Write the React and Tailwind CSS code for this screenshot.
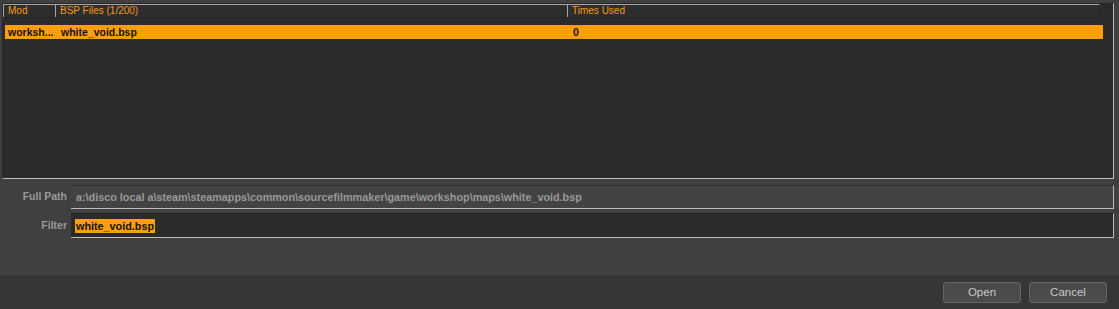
import React from "react";

const font = { fontFamily: '"Liberation Sans", Arial, sans-serif' };

const App = () => {
  return (
    <div className="w-[1119px] h-[309px] bg-[#404040] flex flex-col" style={font}>
      <div className="flex-1 flex flex-col pt-[3px] pl-[2px] pr-[5px]">
        {/* list panel */}
        <div className="h-[176px] bg-[#2b2b2b] border-t border-l border-[#262626] border-r border-r-[#bdbdbd] border-b border-b-[#bdbdbd] flex flex-col">
          <div className="flex h-[14px] w-[1097px] bg-[#2d2d2d] border-t border-[#a8a8a8] border-r border-r-[#222] border-b border-b-[#222] text-[10px] leading-[12px] text-[#f59a1e]">
            <div className="w-[52px] border-l border-[#a8a8a8] pl-[4px]">Mod</div>
            <div className="w-[512px] border-l border-[#a8a8a8] pl-[4px]">BSP Files (1/200)</div>
            <div className="flex-1 border-l border-[#a8a8a8] pl-[4px]">Times Used</div>
          </div>
          <div className="mt-[7px] ml-[2px] mr-[10px] h-[14px] bg-[#ffa000] flex text-[10.5px] leading-[14px] font-bold text-[#111]">
            <div className="w-[56px] pl-[3px]">worksh...</div>
            <div className="w-[512px]">white_void.bsp</div>
            <div className="flex-1">0</div>
          </div>
        </div>

        {/* fields */}
        <div className="mt-[6px] flex items-center">
          <div className="w-[69px] pr-[4px] text-right text-[10.5px] font-bold text-[#9a9a9a]">Full Path</div>
          <div className="flex-1 h-[24px] bg-[#434343] border-t border-[#2e2e2e] border-r border-r-[#bdbdbd] border-b border-b-[#bdbdbd] flex items-center pl-[5px] text-[10.8px] font-bold text-[#999]">
            a:\disco local a\steam\steamapps\common\sourcefilmmaker\game\workshop\maps\white_void.bsp
          </div>
        </div>
        <div className="mt-[4px] flex items-center">
          <div className="w-[69px] pr-[4px] text-right text-[10.5px] font-bold text-[#9a9a9a]">Filter</div>
          <div className="flex-1 h-[25px] bg-[#2b2b2b] border-t border-[#232323] border-r border-r-[#bdbdbd] border-b border-b-[#bdbdbd] flex items-center pl-[4px]">
            <span className="bg-[#ffa000] text-[#111] text-[10.8px] font-bold leading-[14px] px-[1px]">white_void.bsp</span>
          </div>
        </div>
      </div>

      {/* bottom bar */}
      <div className="h-[34px] bg-[#363636] flex items-start justify-end gap-[8px] pt-[7px] pr-[12px]">
        <button className="w-[78px] h-[21px] rounded-[3px] border border-[#666] bg-[#4b4b4b] text-[11.5px] text-[#c8c8c8] leading-[19px]">Open</button>
        <button className="w-[78px] h-[21px] rounded-[3px] border border-[#666] bg-[#4b4b4b] text-[11.5px] text-[#c8c8c8] leading-[19px]">Cancel</button>
      </div>
    </div>
  );
};

export default App;
